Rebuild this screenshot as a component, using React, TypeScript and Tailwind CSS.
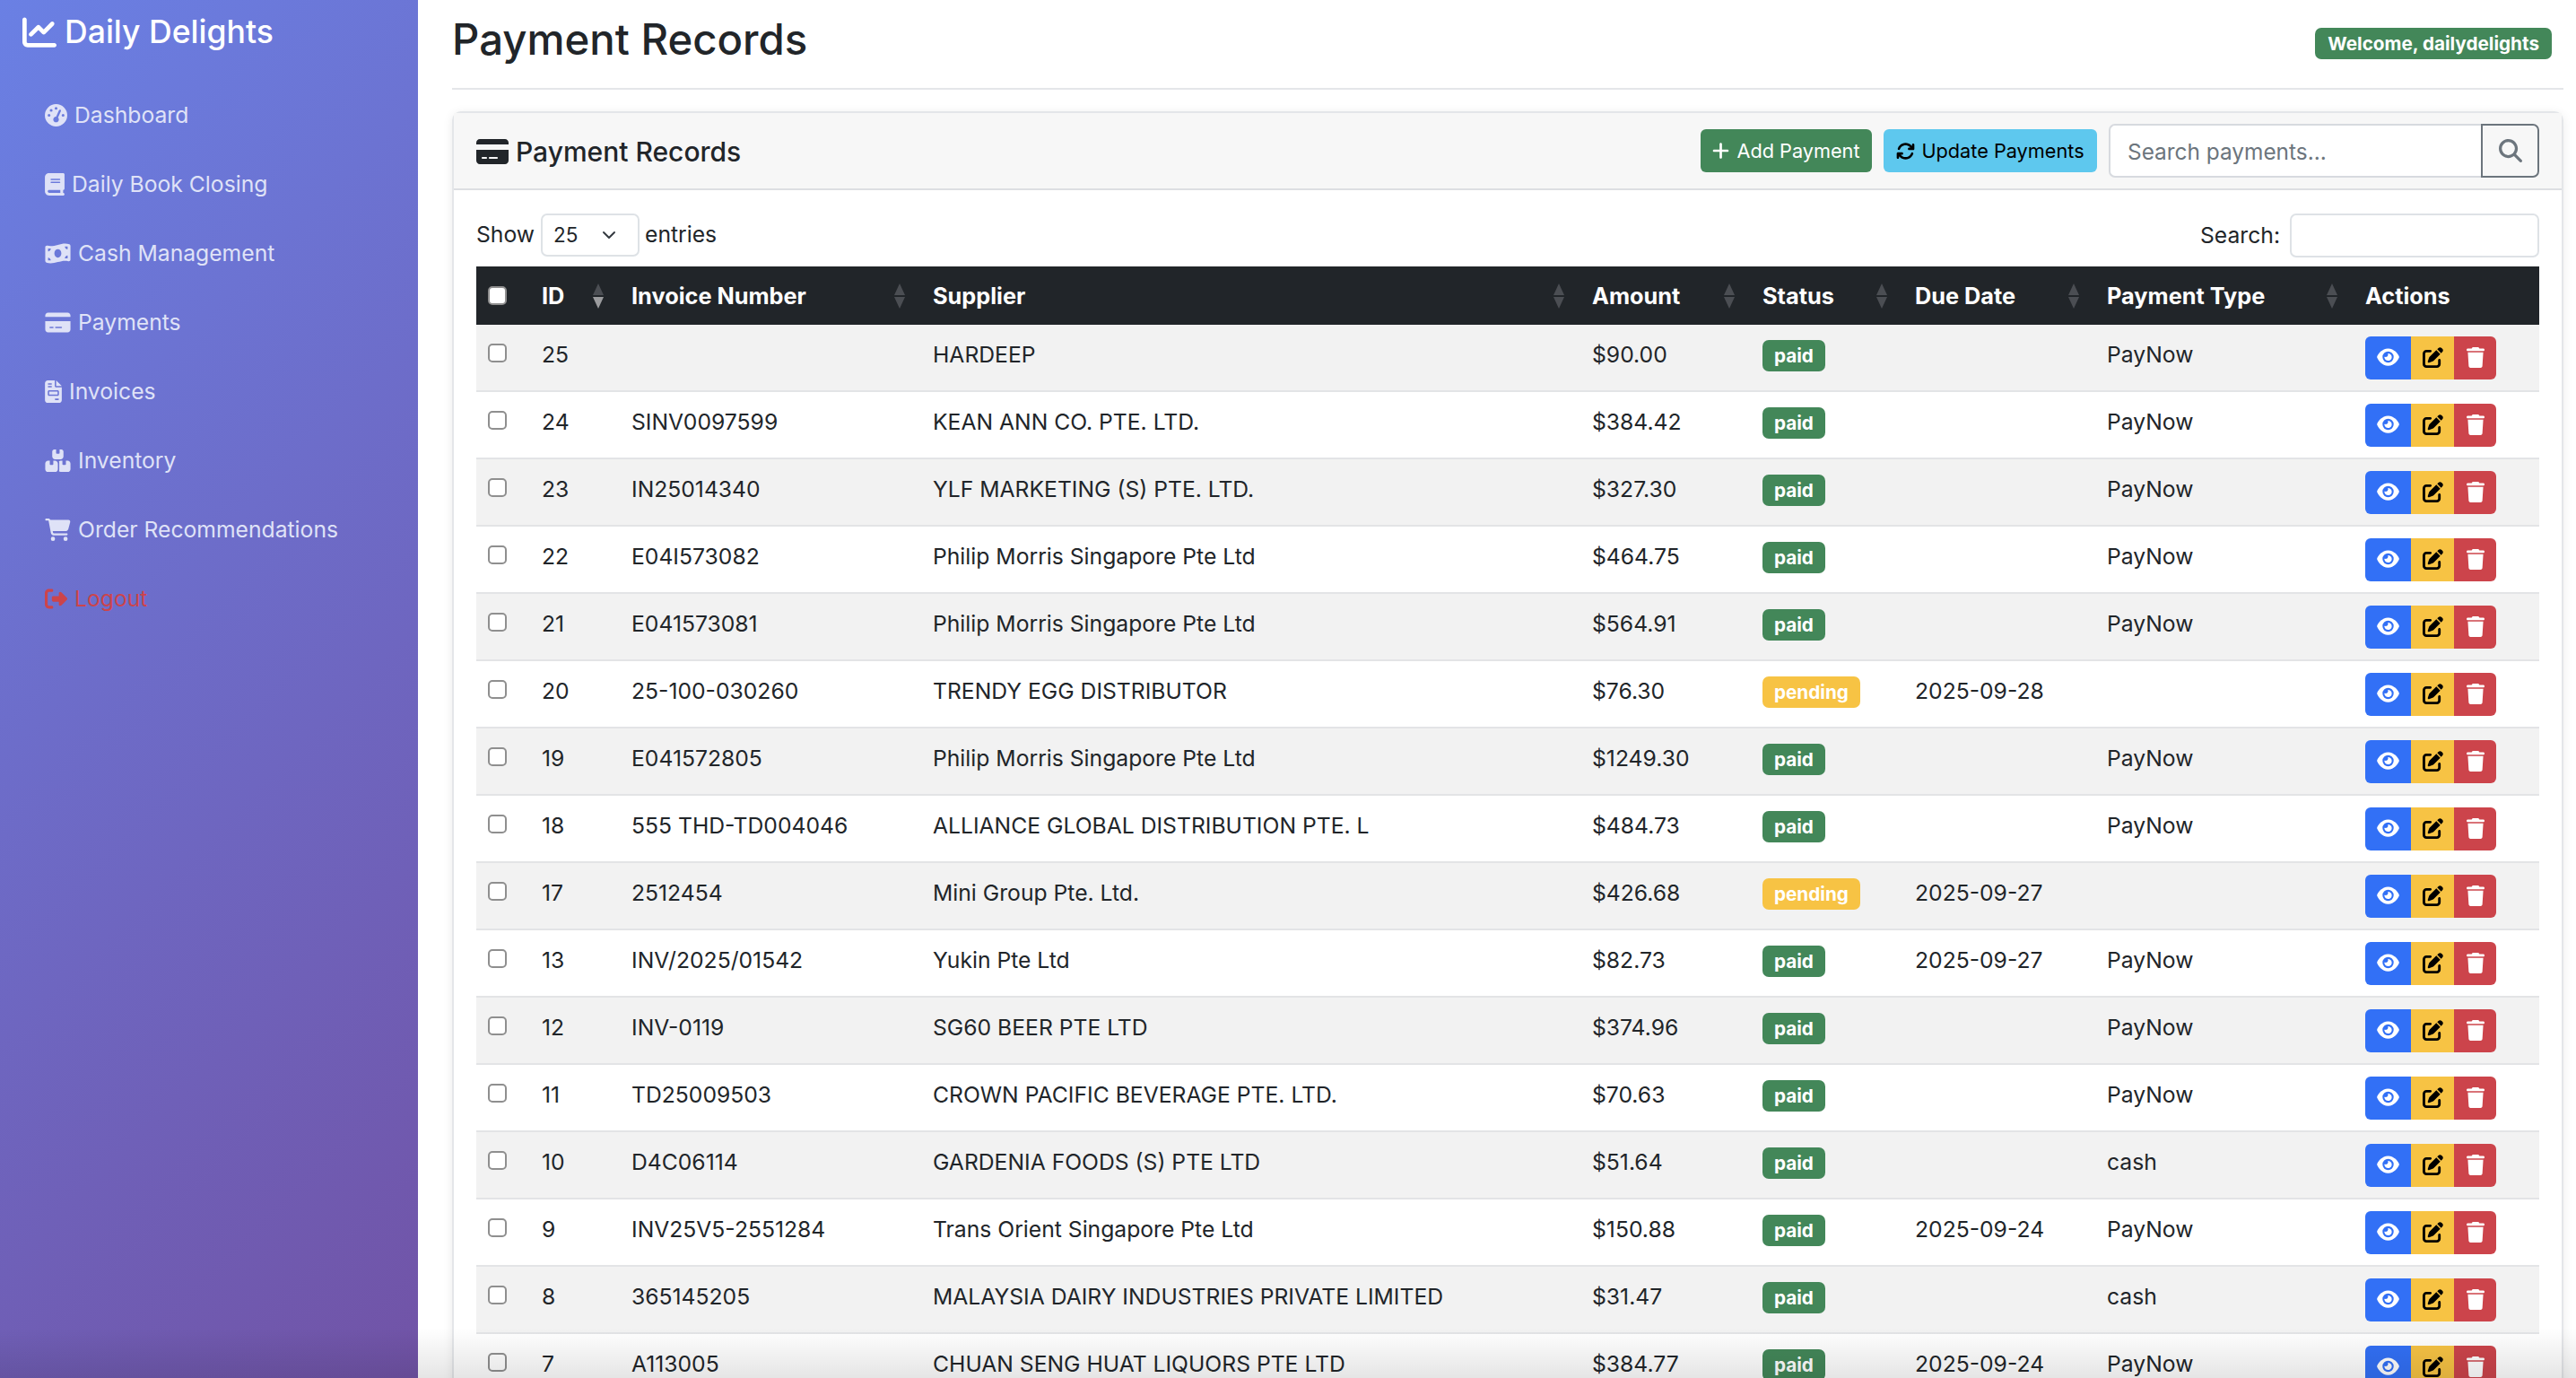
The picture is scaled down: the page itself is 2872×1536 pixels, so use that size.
import React from "react";
import { FaChartLine, FaGaugeHigh, FaBook, FaMoneyBillWave, FaCreditCard, FaFileInvoice, FaBoxesStacked, FaCartShopping, FaRightFromBracket, FaPlus, FaArrowsRotate, FaMagnifyingGlass, FaEye, FaPenToSquare, FaTrash } from "react-icons/fa6";

const nav = [
  { icon: FaGaugeHigh, label: "Dashboard", w: "w-[25px]" },
  { icon: FaBook, label: "Daily Book Closing", w: "w-[22px]" },
  { icon: FaMoneyBillWave, label: "Cash Management", w: "w-[29px]" },
  { icon: FaCreditCard, label: "Payments", w: "w-[29px]" },
  { icon: FaFileInvoice, label: "Invoices", w: "w-[19px]" },
  { icon: FaBoxesStacked, label: "Inventory", w: "w-[29px]" },
  { icon: FaCartShopping, label: "Order Recommendations", w: "w-[29px]" },
];

const rows: [string, string, string, string, string, string, string][] = [
  ["25", "", "HARDEEP", "$90.00", "paid", "", "PayNow"],
  ["24", "SINV0097599", "KEAN ANN CO. PTE. LTD.", "$384.42", "paid", "", "PayNow"],
  ["23", "IN25014340", "YLF MARKETING (S) PTE. LTD.", "$327.30", "paid", "", "PayNow"],
  ["22", "E04I573082", "Philip Morris Singapore Pte Ltd", "$464.75", "paid", "", "PayNow"],
  ["21", "E041573081", "Philip Morris Singapore Pte Ltd", "$564.91", "paid", "", "PayNow"],
  ["20", "25-100-030260", "TRENDY EGG DISTRIBUTOR", "$76.30", "pending", "2025-09-28", ""],
  ["19", "E041572805", "Philip Morris Singapore Pte Ltd", "$1249.30", "paid", "", "PayNow"],
  ["18", "555 THD-TD004046", "ALLIANCE GLOBAL DISTRIBUTION PTE. L", "$484.73", "paid", "", "PayNow"],
  ["17", "2512454", "Mini Group Pte. Ltd.", "$426.68", "pending", "2025-09-27", ""],
  ["13", "INV/2025/01542", "Yukin Pte Ltd", "$82.73", "paid", "2025-09-27", "PayNow"],
  ["12", "INV-0119", "SG60 BEER PTE LTD", "$374.96", "paid", "", "PayNow"],
  ["11", "TD25009503", "CROWN PACIFIC BEVERAGE PTE. LTD.", "$70.63", "paid", "", "PayNow"],
  ["10", "D4C06114", "GARDENIA FOODS (S) PTE LTD", "$51.64", "paid", "", "cash"],
  ["9", "INV25V5-2551284", "Trans Orient Singapore Pte Ltd", "$150.88", "paid", "2025-09-24", "PayNow"],
  ["8", "365145205", "MALAYSIA DAIRY INDUSTRIES PRIVATE LIMITED", "$31.47", "paid", "", "cash"],
  ["7", "A113005", "CHUAN SENG HUAT LIQUORS PTE LTD", "$384.77", "paid", "2025-09-24", "PayNow"],
];

const headers = [
  { label: "ID", w: "w-[100px]", active: true },
  { label: "Invoice Number", w: "w-[336px]" },
  { label: "Supplier", w: "w-[735px]" },
  { label: "Amount", w: "w-[190px]" },
  { label: "Status", w: "w-[170px]" },
  { label: "Due Date", w: "w-[214px]" },
  { label: "Payment Type", w: "w-[288px]" },
];

function Sort({ active }: { active?: boolean }) {
  return (
    <svg viewBox="0 0 14 28" className="absolute right-[17px] top-[19px] h-[28px] w-[14px]">
      <path d="M7 0 L13 13 L1 13 Z" fill="#4b4e53" />
      <path d="M7 28 L13 15 L1 15 Z" fill={active ? "#9b9c9e" : "#4b4e53"} />
    </svg>
  );
}

function Check() {
  return (
    <input
      type="checkbox"
      readOnly
      className="block h-[21px] w-[21px] appearance-none rounded-[5px] border-2 border-[#8f8f8f] bg-white"
    />
  );
}

export default function App() {
  return (
    <div className="relative flex h-screen overflow-hidden bg-white font-['Inter',sans-serif] text-[#212529]">
      <aside className="w-[466px] shrink-0 bg-[linear-gradient(135deg,#6a80e4_0%,#7153a6_100%)]">
        <div className="flex h-[72px] items-center pl-[25px] text-[35.6px] font-medium text-white">
          <FaChartLine className="mr-[9px] h-[38px] w-[38px]" />
          <span>Daily Delights</span>
        </div>
        <nav className="mt-[18px] flex flex-col pl-[50px]">
          {nav.map(({ icon: Icon, label, w }) => (
            <div key={label} className="flex h-[77px] items-center text-[24.7px] text-[#dfe2f7]">
              <Icon className={`mr-[8px] h-[25px] ${w}`} />
              <span>{label}</span>
            </div>
          ))}
          <div className="flex h-[77px] items-center text-[24.7px] text-[#cc444b]">
            <FaRightFromBracket className="mr-[8px] h-[25px] w-[25px]" />
            <span>Logout</span>
          </div>
        </nav>
      </aside>

      <main className="min-w-0 flex-1 pl-[38px] pr-[14px]">
        <header className="flex h-[100px] items-start justify-between border-b-2 border-[#e4e6e9] pb-[2px]">
          <h1 className="mt-[14px] text-[47.3px] leading-[60px] font-medium">Payment Records</h1>
          <span className="mt-[31px] mr-[13px] flex h-[35px] items-center rounded-[7px] bg-[#438759] px-[14px] text-[20.7px] font-bold text-white">
            Welcome, dailydelights
          </span>
        </header>

        <section className="mt-[24px] rounded-t-[10px] border-2 border-b-0 border-[#e4e6e9] shadow-[0_2px_12px_rgba(0,0,0,0.08)]">
          <div className="flex h-[86px] items-center justify-between border-b-2 border-[#dddfe2] bg-[#f7f7f7] pl-[25px] pr-[25px]">
            <h2 className="flex items-center pt-[2px] text-[30px] font-medium">
              <FaCreditCard className="mr-[8px] h-[32px] w-[36px]" />
              Payment Records
            </h2>
            <div className="flex items-center gap-[13px]">
              <button className="flex h-[48px] w-[191px] items-center justify-center gap-[8px] rounded-[6px] bg-[#438759] text-[21.7px] text-white">
                <FaPlus className="h-[22px] w-[19px]" />
                Add Payment
              </button>
              <button className="flex h-[48px] w-[238px] items-center justify-center gap-[7px] rounded-[6px] bg-[#5ec8ee] text-[21.7px] text-black">
                <FaArrowsRotate className="h-[21px] w-[21px]" />
                Update Payments
              </button>
              <div className="flex h-[60px]">
                <input
                  placeholder="Search payments..."
                  className="w-[415px] rounded-l-[7px] border-2 border-r-0 border-[#d7dadf] bg-white px-[19px] pt-[3px] text-[24.4px] outline-none placeholder:text-[#6c757d]"
                />
                <button className="flex w-[65px] items-center justify-center rounded-r-[7px] border-2 border-[#6c757d] text-[#6c757d]">
                  <FaMagnifyingGlass className="h-[26px] w-[26px]" />
                </button>
              </div>
            </div>
          </div>

          <div className="pl-[25px] pr-[25px]">
            <div className="flex h-[85px] items-start justify-between pt-[26px]">
              <div className="flex items-center text-[24.7px]">
                <span>Show</span>
                <div className="relative ml-[7px] mr-[6px] flex h-[48px] w-[110px] items-center rounded-[7px] border-2 border-[#dee2e6] pl-[12px] text-[22.5px]">
                  25
                  <svg viewBox="0 0 16 16" className="absolute right-[24px] top-[14px] h-[16px] w-[16px]" fill="none" stroke="#343a40" strokeWidth="2" strokeLinecap="round" strokeLinejoin="round">
                    <path d="m2 5 6 6 6-6" />
                  </svg>
                </div>
                <span>entries</span>
              </div>
              <div className="flex items-center text-[24.7px]">
                <span className="mr-[11px]">Search:</span>
                <div className="h-[49px] w-[278px] rounded-[7px] border-2 border-[#dee2e6]" />
              </div>
            </div>

            <table className="w-[2300px] table-fixed border-separate border-spacing-0 text-[24.7px] [&_td]:border-b-2 [&_td]:border-[#e3e4e6]">
              <thead>
                <tr className="h-[65px] bg-[#212529] text-left text-[25.3px] text-white">
                  <th className="w-[60px] pl-[13px] align-middle"><Check /></th>
                  {headers.map((h) => (
                    <th key={h.label} className={`relative pl-[13px] font-bold ${h.w}`}>
                      {h.label}
                      <Sort active={h.active} />
                    </th>
                  ))}
                  <th className="pl-[13px] font-bold">Actions</th>
                </tr>
              </thead>
              <tbody>
                {rows.map((r, i) => (
                  <tr key={r[0]} className={`h-[75px] ${i % 2 === 0 ? "bg-[#f2f2f2]" : "bg-white"}`}>
                    <td className="pl-[13px] pt-[21px] align-top"><Check /></td>
                    <td className="pl-[13px] pt-[15px] align-top">{r[0]}</td>
                    <td className="truncate pl-[13px] pt-[15px] align-top">{r[1]}</td>
                    <td className="truncate pl-[13px] pt-[15px] align-top">{r[2]}</td>
                    <td className="pl-[13px] pt-[15px] align-top">{r[3]}</td>
                    <td className="pl-[13px] pt-[17px] align-top">
                      <span className={`flex h-[35px] w-fit items-center rounded-[7px] px-[13px] text-[20.7px] font-bold text-white ${r[4] === "paid" ? "bg-[#438759]" : "bg-[#f7c344]"}`}>
                        {r[4]}
                      </span>
                    </td>
                    <td className="pl-[13px] pt-[15px] align-top">{r[5]}</td>
                    <td className="pl-[13px] pt-[15px] align-top">{r[6]}</td>
                    <td className="pl-[13px] pt-[13px] align-top">
                      <div className="flex h-[48px] w-[146px] overflow-hidden rounded-[6px]">
                        <span className="flex w-[51px] items-center justify-center bg-[#3270f6] pb-[2px] text-white"><FaEye className="h-[22px] w-[25px]" /></span>
                        <span className="flex w-[48px] items-center justify-center bg-[#f7c344] pb-[2px] text-black"><FaPenToSquare className="h-[23px] w-[23px]" /></span>
                        <span className="flex w-[47px] items-center justify-center bg-[#cc444b] pb-[2px] text-white"><FaTrash className="h-[23px] w-[20px]" /></span>
                      </div>
                    </td>
                  </tr>
                ))}
              </tbody>
            </table>
          </div>
        </section>
      </main>
      <div className="pointer-events-none absolute inset-x-0 bottom-0 h-[56px] bg-[linear-gradient(to_bottom,rgba(0,0,0,0),rgba(0,0,0,0.1))]" />
    </div>
  );
}
